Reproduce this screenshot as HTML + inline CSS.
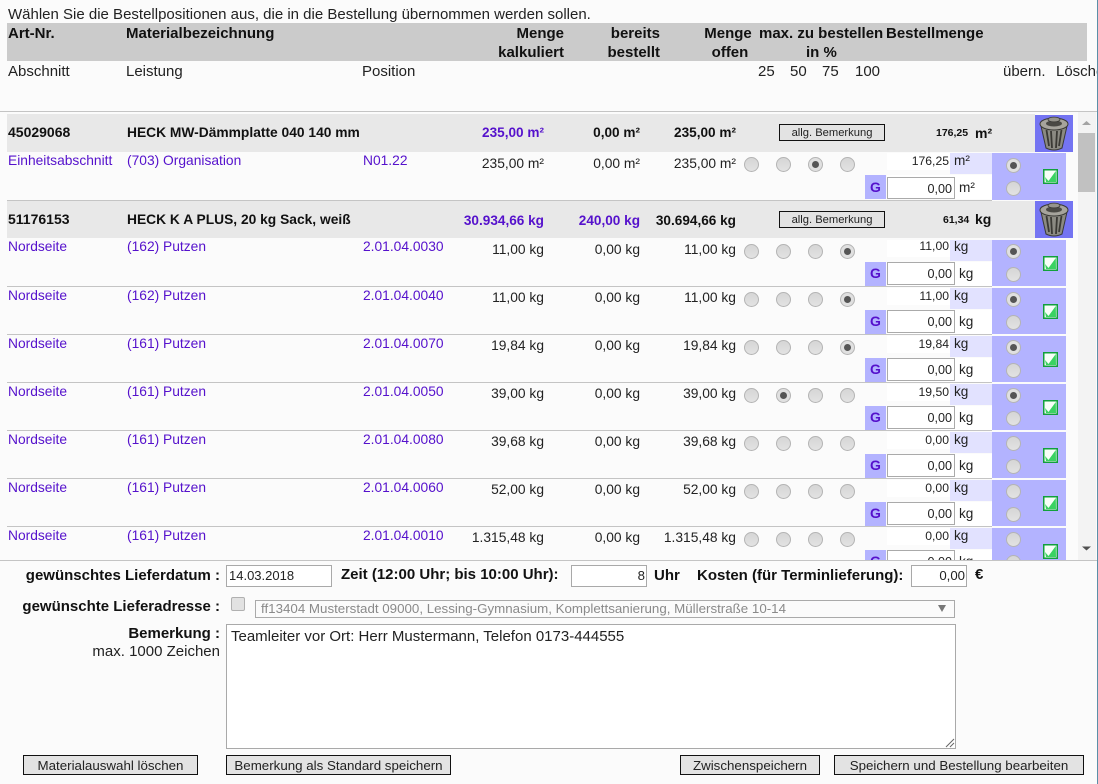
<!DOCTYPE html>
<html lang="de"><head><meta charset="utf-8"><title>Bestellung</title>
<style>
html,body{margin:0;padding:0;background:#fbfbfb}
body{position:relative;width:1098px;height:784px;overflow:hidden;font:15px/16px "Liberation Sans",Arial,sans-serif;color:#222}
.t{position:absolute;white-space:nowrap;line-height:16px;font-size:15px}
.b{font-weight:bold;color:#111}
.box{position:absolute}
#s{position:absolute;left:0;top:0;width:1077px;height:560px;overflow:hidden}
#s .t{font-size:13.8px}
#s .b{font-size:13.6px}
.row{position:absolute;left:0;top:0;width:1077px;height:47px}
.p{color:#5511cc;top:1px}
.q{text-align:right;width:100px;top:3px}
.q1{left:444px}.q2{left:540px}.q3{left:636px}
.r{position:absolute;width:13px;height:13px;border:1px solid #b4b4b4;border-radius:50%;background:linear-gradient(#d6d6d6,#e2e2e2);top:5px;box-sizing:content-box}
.r.c{background:#e0e0e0}
.r.c::after{content:"";position:absolute;left:3px;top:3px;width:7px;height:7px;border-radius:50%;background:#555}
.a1{left:744px}.a2{left:776px}.a3{left:808px}.a4{left:840px}
.u1{left:1006px;top:5px}.u2{left:1006px;top:28px}
.blue{position:absolute;left:992px;top:1px;width:74px;height:46px;background:#b3b3ff}
.lav{position:absolute;left:950px;top:1px;width:42px;height:21px;background:#e2e2ff}
.wh{position:absolute;left:887px;top:1px;width:63px;height:17px;background:#fff}
.low{position:absolute;left:887px;top:23px;width:105px;height:24px;background:#fff}
.g{position:absolute;left:865px;top:23px;width:21px;height:24px;background:#b3b3ff;color:#5511cc;font-weight:bold;text-align:center;line-height:22px;font-size:14px}
#s .val{text-align:right;left:850px;width:99px;top:1px;font-size:12.2px}
#s .un{left:954px;top:1px;font-size:13.6px}
.inp{position:absolute;left:887px;top:23px;width:68px;height:23px;box-sizing:border-box;border:1px solid #aaa;background:#fff;text-align:right;padding-right:2px;line-height:23px;font-size:12.6px}
#s .un2{left:959px;top:27px;font-size:13.6px}
.ck{position:absolute;left:1043px;top:17px;width:15px;height:15px}
.line{position:absolute;left:7px;height:1px;width:985px;background:#c4c4c4}
.gr{position:absolute;left:7px;width:1028px;background:#e8e8e8}
.tr{position:absolute;left:1035px;width:38px;height:37px;background:#7474f2}
.bt{position:absolute;box-sizing:border-box;border:1px solid #111;background:#e3e3e3;text-align:center;color:#222}
.in2{position:absolute;box-sizing:border-box;border:1px solid #a9a9a9;background:#fff;height:22px;top:565px;line-height:20px;padding:0 1px;font-size:13.2px}
</style></head><body>

<span class="t" style="left:8px;top:7px">Wählen Sie die Bestellpositionen aus, die in die Bestellung übernommen werden sollen.</span>
<div class="box" style="left:7px;top:23px;width:1080px;height:38px;background:#cbcbcb"></div>
<span class="t b" style="left:8px;top:26px">Art-Nr.</span>
<span class="t b" style="left:126px;top:26px">Materialbezeichnung</span>
<span class="t b" style="left:464px;width:100px;text-align:right;top:26px">Menge</span>
<span class="t b" style="left:464px;width:100px;text-align:right;top:45px">kalkuliert</span>
<span class="t b" style="left:560px;width:100px;text-align:right;top:26px">bereits</span>
<span class="t b" style="left:560px;width:100px;text-align:right;top:45px">bestellt</span>
<span class="t b" style="left:678px;width:100px;text-align:center;top:26px">Menge</span>
<span class="t b" style="left:680px;width:100px;text-align:center;top:45px">offen</span>
<span class="t b" style="left:759px;top:26px">max. zu bestellen</span>
<span class="t b" style="left:806px;top:45px">in %</span>
<span class="t b" style="left:886px;top:26px">Bestellmenge</span>
<span class="t" style="left:8px;top:64px">Abschnitt</span>
<span class="t" style="left:126px;top:64px">Leistung</span>
<span class="t" style="left:362px;top:64px">Position</span>
<span class="t" style="left:758px;top:64px">25</span>
<span class="t" style="left:790px;top:64px">50</span>
<span class="t" style="left:822px;top:64px">75</span>
<span class="t" style="left:855px;top:64px">100</span>
<span class="t" style="left:1003px;top:64px">übern.</span>
<span class="t" style="left:1056px;top:64px;width:41px;overflow:hidden">Löschen</span>
<div class="box" style="left:0;top:111px;width:1097px;height:1px;background:#c4c4c4"></div>

<svg width="0" height="0" style="position:absolute"><defs>
<symbol id="trash" viewBox="0 0 38 37">
<path d="M6 11 L11 33 Q19 37 27 33 L32 11 Z" fill="#8b8a82" stroke="#3a3a36" stroke-width="1"/>
<path d="M11.5 15 L14 31 M16 16 L17 33 M22 16 L21 33 M26.5 15 L24 31" stroke="#3a3934" stroke-width="1.8" fill="none"/>
<ellipse cx="19" cy="9" rx="14" ry="6" fill="#a6a49c" stroke="#3a3a36"/>
<ellipse cx="19" cy="8.5" rx="8" ry="3" fill="#4a4944"/>
<ellipse cx="19" cy="4.5" rx="6" ry="2.4" fill="#96948c" stroke="#3a3a36" stroke-width=".8"/>
</symbol>
<symbol id="chk" viewBox="0 0 15 15">
<rect x=".75" y=".75" width="13.5" height="13.5" fill="#f7fff7" stroke="#12a03c" stroke-width="1.5"/>
<path d="M2 8 L5.5 12 L12.8 2 L13 13 L3 13 Z" fill="#3ad262"/>
</symbol>
</defs></svg>

<div id="s">
<!-- Gruppe 1 -->
<div class="gr" style="top:114px;height:38px"></div>
<span class="t b" style="left:8px;top:124px;font-size:14px">45029068</span>
<span class="t b" style="left:127px;top:125px;font-size:13.8px">HECK MW-Dämmplatte 040 140 mm</span>
<span class="t b q q1" style="top:125px;color:#5511cc">235,00 m²</span>
<span class="t b q q2" style="top:125px">0,00 m²</span>
<span class="t b q q3" style="top:125px">235,00 m²</span>
<div class="bt" style="left:779px;top:124px;width:106px;height:17px;font-size:11.2px;line-height:16px">allg. Bemerkung</div>
<span class="t b" style="left:936px;top:125px;font-size:10.5px">176,25</span>
<span class="t b" style="left:975px;top:125px;font-size:14px">m²</span>
<svg class="tr" style="top:115px"><use href="#trash"/></svg>

<div class="row" style="top:152px">
<span class="t p" style="left:8px">Einheitsabschnitt</span><span class="t p" style="left:127px">(703) Organisation</span><span class="t p" style="left:363px">N01.22</span>
<span class="t q q1" style="top:4px">235,00 m²</span><span class="t q q2" style="top:4px">0,00 m²</span><span class="t q q3" style="top:4px">235,00 m²</span>
<i class="r a1"></i><i class="r a2"></i><i class="r c a3"></i><i class="r a4"></i>
<div class="wh"></div><div class="lav"></div><div class="low"></div><div class="g" style="line-height:24px">G</div>
<span class="t val">176,25</span><span class="t un">m²</span>
<div class="inp" style="top:25px;height:22px;line-height:22px">0,00</div><span class="t un2" style="top:28px">m²</span>
<div class="blue" style="height:47px"></div><i class="r c u1 " style="top:6px"></i><i class="r u2" style="top:29px"></i>
<svg class="ck" style="top:17px"><use href="#chk"/></svg>
</div>
<div class="line" style="top:200px"></div>

<!-- Gruppe 2 -->
<div class="gr" style="top:201px;height:37px"></div>
<span class="t b" style="left:8px;top:211px;font-size:14px">51176153</span>
<span class="t b" style="left:127px;top:212px;font-size:13.8px">HECK K A PLUS, 20 kg Sack, weiß</span>
<span class="t b q q1" style="top:213px;color:#5511cc">30.934,66 kg</span>
<span class="t b q q2" style="top:213px;color:#5511cc">240,00 kg</span>
<span class="t b q q3" style="top:213px">30.694,66 kg</span>
<div class="bt" style="left:779px;top:211px;width:106px;height:17px;font-size:11.2px;line-height:16px">allg. Bemerkung</div>
<span class="t b" style="left:943px;top:212px;font-size:10.5px">61,34</span>
<span class="t b" style="left:975px;top:211px;font-size:14px">kg</span>
<svg class="tr" style="top:201px"><use href="#trash"/></svg>

<div class="row" style="top:239px">
<span class="t p" style="left:8px;top:0">Nordseite</span><span class="t p" style="left:127px;top:0">(162) Putzen</span><span class="t p" style="left:363px;top:0">2.01.04.0030</span>
<span class="t q q1">11,00 kg</span><span class="t q q2">0,00 kg</span><span class="t q q3">11,00 kg</span>
<i class="r a1"></i><i class="r a2"></i><i class="r a3"></i><i class="r c a4"></i>
<div class="wh"></div><div class="lav"></div><div class="low"></div><div class="g">G</div>
<span class="t val" style="top:-1px">11,00</span><span class="t un" style="top:0">kg</span>
<div class="inp">0,00</div><span class="t un2">kg</span>
<div class="blue"></div><i class="r c u1"></i><i class="r u2"></i>
<svg class="ck"><use href="#chk"/></svg>
</div>
<div class="line" style="top:286px"></div>

<div class="row" style="top:287px">
<span class="t p" style="left:8px">Nordseite</span><span class="t p" style="left:127px">(162) Putzen</span><span class="t p" style="left:363px">2.01.04.0040</span>
<span class="t q q1">11,00 kg</span><span class="t q q2">0,00 kg</span><span class="t q q3">11,00 kg</span>
<i class="r a1"></i><i class="r a2"></i><i class="r a3"></i><i class="r c a4"></i>
<div class="wh"></div><div class="lav"></div><div class="low"></div><div class="g">G</div>
<span class="t val">11,00</span><span class="t un">kg</span>
<div class="inp">0,00</div><span class="t un2">kg</span>
<div class="blue"></div><i class="r c u1"></i><i class="r u2"></i>
<svg class="ck"><use href="#chk"/></svg>
</div>
<div class="line" style="top:334px"></div>

<div class="row" style="top:335px">
<span class="t p" style="left:8px">Nordseite</span><span class="t p" style="left:127px">(161) Putzen</span><span class="t p" style="left:363px">2.01.04.0070</span>
<span class="t q q1">19,84 kg</span><span class="t q q2">0,00 kg</span><span class="t q q3">19,84 kg</span>
<i class="r a1"></i><i class="r a2"></i><i class="r a3"></i><i class="r c a4"></i>
<div class="wh"></div><div class="lav"></div><div class="low"></div><div class="g">G</div>
<span class="t val">19,84</span><span class="t un">kg</span>
<div class="inp">0,00</div><span class="t un2">kg</span>
<div class="blue"></div><i class="r c u1"></i><i class="r u2"></i>
<svg class="ck"><use href="#chk"/></svg>
</div>
<div class="line" style="top:382px"></div>

<div class="row" style="top:383px">
<span class="t p" style="left:8px">Nordseite</span><span class="t p" style="left:127px">(161) Putzen</span><span class="t p" style="left:363px">2.01.04.0050</span>
<span class="t q q1">39,00 kg</span><span class="t q q2">0,00 kg</span><span class="t q q3">39,00 kg</span>
<i class="r a1"></i><i class="r c a2"></i><i class="r a3"></i><i class="r a4"></i>
<div class="wh"></div><div class="lav"></div><div class="low"></div><div class="g">G</div>
<span class="t val">19,50</span><span class="t un">kg</span>
<div class="inp">0,00</div><span class="t un2">kg</span>
<div class="blue"></div><i class="r c u1"></i><i class="r u2"></i>
<svg class="ck"><use href="#chk"/></svg>
</div>
<div class="line" style="top:430px"></div>

<div class="row" style="top:431px">
<span class="t p" style="left:8px">Nordseite</span><span class="t p" style="left:127px">(161) Putzen</span><span class="t p" style="left:363px">2.01.04.0080</span>
<span class="t q q1">39,68 kg</span><span class="t q q2">0,00 kg</span><span class="t q q3">39,68 kg</span>
<i class="r a1"></i><i class="r a2"></i><i class="r a3"></i><i class="r a4"></i>
<div class="wh"></div><div class="lav"></div><div class="low"></div><div class="g">G</div>
<span class="t val">0,00</span><span class="t un">kg</span>
<div class="inp">0,00</div><span class="t un2">kg</span>
<div class="blue"></div><i class="r u1"></i><i class="r u2"></i>
<svg class="ck"><use href="#chk"/></svg>
</div>
<div class="line" style="top:478px"></div>

<div class="row" style="top:479px">
<span class="t p" style="left:8px">Nordseite</span><span class="t p" style="left:127px">(161) Putzen</span><span class="t p" style="left:363px">2.01.04.0060</span>
<span class="t q q1">52,00 kg</span><span class="t q q2">0,00 kg</span><span class="t q q3">52,00 kg</span>
<i class="r a1"></i><i class="r a2"></i><i class="r a3"></i><i class="r a4"></i>
<div class="wh"></div><div class="lav"></div><div class="low"></div><div class="g">G</div>
<span class="t val">0,00</span><span class="t un">kg</span>
<div class="inp">0,00</div><span class="t un2">kg</span>
<div class="blue"></div><i class="r u1"></i><i class="r u2"></i>
<svg class="ck"><use href="#chk"/></svg>
</div>
<div class="line" style="top:526px"></div>

<div class="row" style="top:527px">
<span class="t p" style="left:8px">Nordseite</span><span class="t p" style="left:127px">(161) Putzen</span><span class="t p" style="left:363px">2.01.04.0010</span>
<span class="t q q1">1.315,48 kg</span><span class="t q q2">0,00 kg</span><span class="t q q3">1.315,48 kg</span>
<i class="r a1"></i><i class="r a2"></i><i class="r a3"></i><i class="r a4"></i>
<div class="wh"></div><div class="lav"></div><div class="low"></div><div class="g">G</div>
<span class="t val">0,00</span><span class="t un">kg</span>
<div class="inp">0,00</div><span class="t un2">kg</span>
<div class="blue"></div><i class="r u1"></i><i class="r u2"></i>
<svg class="ck"><use href="#chk"/></svg>
</div>
</div>

<!-- Scrollbar -->
<div class="box" style="left:1078px;top:112px;width:18px;height:448px;background:#f3f3f3"></div>
<div class="box" style="left:1078px;top:133px;width:17px;height:59px;background:#c1c1c1"></div>
<svg class="box" style="left:1078px;top:118px" width="17" height="10"><path d="M4 7 L8.5 3 L13 7 Z" fill="#a3a3a3"/></svg>
<svg class="box" style="left:1078px;top:544px" width="17" height="10"><path d="M4 2.5 L8.5 6.5 L13 2.5 Z" fill="#505050"/></svg>
<div class="box" style="left:0;top:560px;width:1097px;height:1px;background:#c4c4c4"></div>
<div class="box" style="left:1097px;top:0;width:1px;height:784px;background:#5b8fa8"></div>

<!-- Unterer Bereich -->
<span class="t b" style="left:0;width:220px;text-align:right;top:568px">gewünschtes Lieferdatum :</span>
<div class="in2" style="left:226px;width:106px;padding-left:2px;font-size:13px">14.03.2018</div>
<span class="t b" style="left:341px;top:567px">Zeit (12:00 Uhr; bis 10:00 Uhr):</span>
<div class="in2" style="left:571px;width:76px;text-align:right">8</div>
<span class="t b" style="left:654px;top:568px">Uhr</span>
<span class="t b" style="left:697px;top:568px">Kosten (für Terminlieferung):</span>
<div class="in2" style="left:911px;width:56px;text-align:right">0,00</div>
<span class="t b" style="left:975px;top:567px">€</span>

<span class="t b" style="left:0;width:220px;text-align:right;top:599px">gewünschte Lieferadresse :</span>
<div class="box" style="left:231px;top:597px;width:14px;height:14px;box-sizing:border-box;border:1px solid #b0b0b0;border-radius:2px;background:#e2e2e2"></div>
<div class="box" style="left:255px;top:600px;width:700px;height:18px;box-sizing:border-box;border:1px solid #aaa;background:#fbfbfb;color:#8a8a8a;padding-left:5px;line-height:16px;white-space:nowrap;font-size:13.33px">ff13404 Musterstadt 09000, Lessing-Gymnasium, Komplettsanierung, Müllerstraße 10-14</div>
<svg class="box" style="left:936px;top:604px" width="12" height="10"><path d="M2 1 H10 L6 8 Z" fill="#777"/></svg>

<span class="t b" style="left:0;width:220px;text-align:right;top:626px">Bemerkung :</span>
<span class="t" style="left:0;width:220px;text-align:right;top:644px">max. 1000 Zeichen</span>
<div class="box" style="left:226px;top:624px;width:730px;height:125px;box-sizing:border-box;border:1px solid #a9a9a9;background:#fff;padding:4px;line-height:16px;font-size:15px">Teamleiter vor Ort: Herr Mustermann, Telefon 0173-444555</div>
<svg class="box" style="left:944px;top:737px" width="11" height="11"><path d="M2 10 L10 2 M6 10 L10 6" stroke="#666" stroke-width="1" fill="none"/></svg>

<div class="bt" style="left:23px;top:755px;width:175px;height:20px;font-size:13.33px;line-height:20px">Materialauswahl löschen</div>
<div class="bt" style="left:226px;top:755px;width:225px;height:20px;font-size:13.33px;line-height:20px">Bemerkung als Standard speichern</div>
<div class="bt" style="left:680px;top:755px;width:140px;height:20px;font-size:13.33px;line-height:20px">Zwischenspeichern</div>
<div class="bt" style="left:834px;top:755px;width:250px;height:20px;font-size:13.33px;line-height:20px">Speichern und Bestellung bearbeiten</div>
</body></html>
